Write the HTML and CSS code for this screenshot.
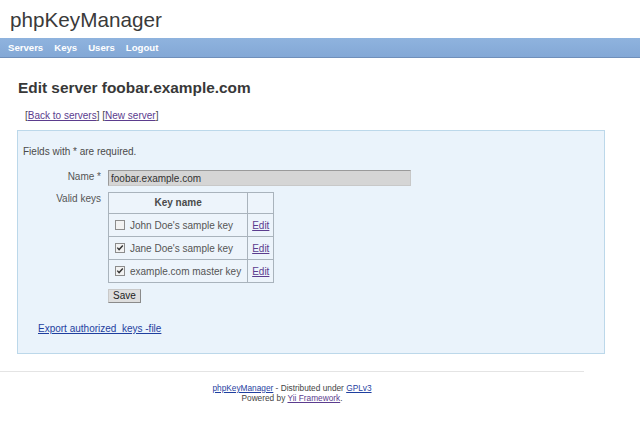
FILE: index.html
```html
<!DOCTYPE html>
<html>
<head>
<meta charset="utf-8">
<title>phpKeyManager</title>
<link rel="stylesheet" href="styles.css">
</head>
<body>
<div class="header"><div class="logo">phpKeyManager</div></div>
<div class="mainmenu">
  <ul>
    <li><a href="#">Servers</a></li>
    <li><a href="#">Keys</a></li>
    <li><a href="#">Users</a></li>
    <li><a href="#">Logout</a></li>
  </ul>
</div>
<div class="content">
  <h1>Edit server foobar.example.com</h1>
  <p class="actions">[<a class="visited" href="#">Back to servers</a>] [<a class="visited" href="#">New server</a>]</p>
  <div class="form">
    <p class="note">Fields with * are required.</p>
    <div class="row">
      <label class="lbl">Name *</label>
      <input class="text" type="text" value="foobar.example.com" disabled>
    </div>
    <div class="row">
      <label class="lbl">Valid keys</label>
      <table class="keys">
        <tr><th>Key name</th><th class="act"></th></tr>
        <tr>
          <td><span class="cb"><svg width="10" height="10" viewBox="0 0 10 10"><rect x="0.5" y="0.5" width="9" height="9" fill="#f2f2f2" stroke="#8c8c8c"/></svg></span>John Doe's sample key</td>
          <td class="act"><a class="visited" href="#">Edit</a></td>
        </tr>
        <tr>
          <td><span class="cb"><svg width="10" height="10" viewBox="0 0 10 10"><rect x="0.5" y="0.5" width="9" height="9" fill="#f2f2f2" stroke="#8c8c8c"/><path d="M2.3 4.6 L4.1 6.6 L7.8 2.6" fill="none" stroke="#333" stroke-width="1.4"/></svg></span>Jane Doe's sample key</td>
          <td class="act"><a class="visited" href="#">Edit</a></td>
        </tr>
        <tr>
          <td><span class="cb"><svg width="10" height="10" viewBox="0 0 10 10"><rect x="0.5" y="0.5" width="9" height="9" fill="#f2f2f2" stroke="#8c8c8c"/><path d="M2.3 4.6 L4.1 6.6 L7.8 2.6" fill="none" stroke="#333" stroke-width="1.4"/></svg></span>example.com master key</td>
          <td class="act"><a class="visited" href="#">Edit</a></td>
        </tr>
      </table>
    </div>
    <div class="row buttons">
      <button class="btn" type="button">Save</button>
    </div>
    <p class="export"><a href="#">Export authorized_keys -file</a></p>
  </div>
</div>
<div class="footer">
  <div><a href="#">phpKeyManager</a> - Distributed under <a href="#">GPLv3</a></div>
  <div>Powered by <a class="visited" href="#">Yii Framework</a>.</div>
</div>
</body>
</html>
```

FILE: styles.css
```css
html, body {
  margin: 0;
  padding: 0;
  background: #fff;
}
body {
  font-family: "Liberation Sans", Arial, sans-serif;
  font-size: 10px;
  color: #4a4a4a;
}
a {
  color: #1f3f9f;
  text-decoration: underline;
}
a.visited {
  color: #5b3c8e;
}
.header {
  height: 38px;
}
.logo {
  padding: 8px 0 0 10px;
  font-size: 20.7px;
  line-height: 24px;
  color: #3a3a3a;
}
.mainmenu {
  height: 19px;
  padding-top: 1px;
  background: linear-gradient(#8fb3de, #83a8d6);
  border-bottom: 1px solid #6f8fba;
  box-sizing: border-box;
  height: 20px;
}
.mainmenu ul {
  margin: 0;
  padding: 0 0 0 2.5px;
  list-style: none;
  display: flex;
}
.mainmenu a {
  display: block;
  padding: 0 5.5px;
  font-size: 9.6px;
  line-height: 18px;
  font-weight: bold;
  color: #fff;
  text-decoration: none;
}
.content h1 {
  margin: 21px 0 0 18px;
  font-size: 15.4px;
  line-height: 18px;
  font-weight: bold;
  color: #383838;
}
.actions {
  margin: 12px 0 0 25px;
  line-height: 13px;
}
.form {
  margin: 8px 0 0 17px;
  width: 588px;
  box-sizing: border-box;
  border: 1px solid #bcd8ea;
  background: #eaf3fb;
  padding: 14px 0 18px 5px;
}
.note {
  margin: 0;
  line-height: 13px;
}
.row {
  display: flex;
  align-items: flex-start;
  gap: 7px;
}
.row:first-of-type {
  margin-top: 12px;
}
.row + .row {
  margin-top: 6px;
}
.lbl {
  width: 78px;
  text-align: right;
  line-height: 13px;
  color: #555;
}
.text {
  width: 303px;
  height: 16px;
  box-sizing: border-box;
  margin: 0;
  padding: 0 2px;
  border: 1px solid #9a9a9a;
  border-right-color: #c8c8c8;
  border-bottom-color: #c8c8c8;
  background: #d5d5d5;
  font-family: "Liberation Sans", Arial, sans-serif;
  font-size: 10px;
  color: #333;
}
.keys {
  border-collapse: separate;
  border-spacing: 0;
  border-top: 1px solid #a9b3bc;
  border-left: 1px solid #a9b3bc;
  background: #edf4fb;
}
.keys th, .keys td {
  border-right: 1px solid #a9b3bc;
  border-bottom: 1px solid #a9b3bc;
  padding: 0 6px;
  white-space: nowrap;
}
.keys th {
  font-weight: bold;
  line-height: 20px;
  text-align: center;
  color: #4a4a4a;
}
.keys td {
  padding-top: 2px;
  line-height: 20px;
  color: #555;
}
.keys .act {
  padding-left: 4px;
  padding-right: 4px;
}
.cb {
  display: inline-block;
  width: 10px;
  height: 10px;
  margin-right: 5px;
  vertical-align: -1px;
}
.cb svg {
  display: block;
}
.buttons {
  padding-left: 85px;
}
.btn {
  margin: 0;
  height: 14px;
  padding: 0 4px;
  border: 1px solid #8a8a8a;
  border-top-color: #c9c9c9;
  border-left-color: #c9c9c9;
  background: #dedede;
  font-family: "Liberation Sans", Arial, sans-serif;
  font-size: 10px;
  line-height: 12px;
  color: #222;
}
.export {
  margin: 19px 0 0 15px;
  line-height: 13px;
}
.footer {
  margin-top: 17px;
  width: 584px;
  border-top: 1px solid #e4e4e4;
  padding-top: 11px;
  text-align: center;
  font-size: 8.3px;
  line-height: 10px;
  color: #444;
}
```
